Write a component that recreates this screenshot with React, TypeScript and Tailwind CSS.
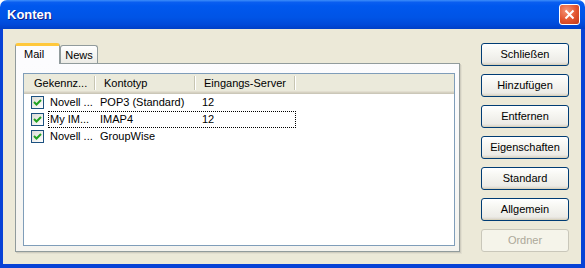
import React from "react";

const font = { fontFamily: '"Liberation Sans", Arial, sans-serif' };

function XpButton({ label, disabled }: { label: string; disabled?: boolean }) {
  return (
    <div
      className={
        "h-[23px] w-[88px] rounded-[3px] border flex items-center justify-center text-[11px] leading-none " +
        (disabled
          ? "border-[#c9c7ba] bg-[#f5f4ea] text-[#aca899]"
          : "border-[#003c74] bg-[linear-gradient(to_bottom,#ffffff_0%,#f8f8f4_30%,#ecebe6_85%,#d6d0c5_100%)] text-black shadow-[inset_0_-1px_0_#d8d2bd]")
      }
    >
      {label}
    </div>
  );
}

function Check() {
  return (
    <div className="w-[13px] h-[13px] border border-[#1c5180] bg-[linear-gradient(135deg,#dcdcd6,#ffffff)] flex items-center justify-center">
      <svg width="9" height="9" viewBox="0 0 9 9">
        <path d="M1 4 L3.5 6.5 L8 2" stroke="#21a121" strokeWidth="2" fill="none" />
      </svg>
    </div>
  );
}

const rows = [
  { name: "Novell ...", type: "POP3 (Standard)", server: "12", focus: false },
  { name: "My IM...", type: "IMAP4", server: "12", focus: true },
  { name: "Novell ...", type: "GroupWise", server: "", focus: false },
];

export default function App() {
  return (
    <div className="w-[585px] h-[268px] bg-white flex flex-col overflow-hidden" style={font}>
      {/* Title bar */}
      <div className="h-[29px] shrink-0 rounded-t-[7px] bg-[linear-gradient(to_bottom,#3d8efa_0%,#0a5ef0_8%,#0058ee_20%,#0054e6_60%,#0049d9_85%,#003fc6_100%)] flex items-center pl-[7px] pr-[5px]">
        <span className="text-white font-bold text-[13px] [text-shadow:1px_1px_0_#0f1b85]">Konten</span>
        <div className="ml-auto w-[21px] h-[21px] rounded-[3px] border border-white bg-[radial-gradient(circle_at_35%_30%,#f59577_0%,#e2532d_55%,#c23a1a_100%)] flex items-center justify-center">
          <svg width="11" height="11" viewBox="0 0 11 11">
            <path d="M1.5 1.5 L9.5 9.5 M9.5 1.5 L1.5 9.5" stroke="white" strokeWidth="2" />
          </svg>
        </div>
      </div>

      {/* Body */}
      <div className="flex-1 flex bg-[#ece9d8] border-l-[3px] border-r-[4px] border-b-[4px] border-[#0842d6] pl-[12px] pt-[13px] text-[11px] text-black">
        {/* Tabs + panel */}
        <div className="w-[447px] flex flex-col">
          <div className="h-[21px] flex items-end">
            <div className="relative z-10 w-[45px] h-[21px] -mb-px rounded-t-[3px] border-x border-[#919b9c] border-t-[3px] border-t-[#ffc83c] bg-[#fcfcfe] flex items-center pl-[8px] pb-[1px]">
              Mail
            </div>
            <div className="w-[38px] h-[18px] rounded-t-[3px] border border-b-0 border-[#919b9c] bg-[linear-gradient(to_bottom,#ffffff,#ecebe5)] flex items-center justify-center pt-[1px]">
              News
            </div>
          </div>
          <div className="w-[445px] h-[189px] border border-[#919b9c] bg-[linear-gradient(to_bottom,#fcfcfe,#f4f3ee)] shadow-[1px_1px_0_#d0cdbf,2px_2px_0_#e2dfd0] pl-[7px] pt-[9px] pr-[4px] pb-[5px]">
            {/* List view */}
            <div className="w-[432px] h-[173px] border border-[#7f9db9] bg-white flex flex-col">
              <div className="h-[20px] shrink-0 flex items-center bg-[#ebeadb] shadow-[inset_0_-1px_0_#cbc7b8,inset_0_-2px_0_#d6d2c2,inset_0_-3px_0_#e2ded0]">
                <div className="w-[70px] pl-[10px] pb-[2px]">Gekennz...</div>
                <div className="w-[2px] h-[14px] mb-[2px] border-l border-[#c7c5b2] bg-white" />
                <div className="w-[98px] pl-[8px] pb-[2px]">Kontotyp</div>
                <div className="w-[2px] h-[14px] mb-[2px] border-l border-[#c7c5b2] bg-white" />
                <div className="w-[98px] pl-[8px] pb-[2px]">Eingangs-Server</div>
                <div className="w-[2px] h-[14px] mb-[2px] border-l border-[#c7c5b2] bg-white" />
              </div>
              <div className="pt-[0px]">
                {rows.map((r, i) => (
                  <div key={i} className="h-[17px] flex items-center">
                    <div className="w-[24px] pl-[7px] flex items-center">
                      <Check />
                    </div>
                    <div
                      className={
                        "flex items-center h-[17px] w-[248px] " +
                        (r.focus ? "border border-dotted border-black" : "border border-transparent")
                      }
                    >
                      <div className="w-[46px] pl-[1px]">{r.name}</div>
                      <div className="w-[101px] pl-[5px]">{r.type}</div>
                      <div className="pl-[6px]">{r.server}</div>
                    </div>
                  </div>
                ))}
              </div>
            </div>
          </div>
        </div>

        {/* Buttons */}
        <div className="ml-[19px] pt-[1px] flex flex-col gap-[8px]">
          <XpButton label="Schließen" />
          <XpButton label="Hinzufügen" />
          <XpButton label="Entfernen" />
          <XpButton label="Eigenschaften" />
          <XpButton label="Standard" />
          <XpButton label="Allgemein" />
          <XpButton label="Ordner" disabled />
        </div>
      </div>
    </div>
  );
}
